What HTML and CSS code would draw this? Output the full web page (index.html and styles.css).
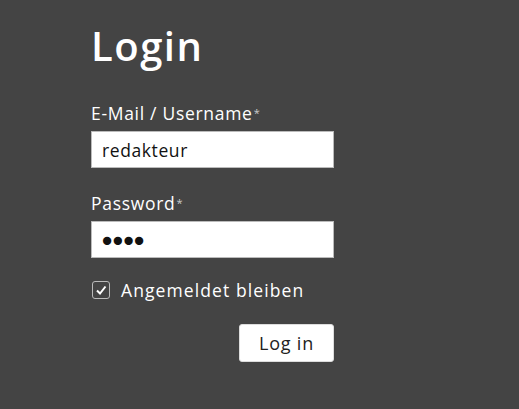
FILE: index.html
```html
<!DOCTYPE html>
<html lang="de">
<head>
    <meta charset="UTF-8">
    <title>Login</title>
    <link rel="stylesheet" href="styles.css">
</head>
<body>
    <div class="login">
        <h1>Login</h1>
        <form>
            <div class="field">
                <label for="user">E-Mail / Username<span class="req">*</span></label>
                <input type="text" id="user" value="redakteur">
            </div>
            <div class="field">
                <label for="pass">Password<span class="req">*</span></label>
                <input type="text" id="pass" class="dots" value="&#9679;&#9679;&#9679;&#9679;">
            </div>
            <label class="remember">
                <span class="box">
                    <svg width="12" height="12" viewBox="0 0 12 12"><path d="M2 6.5 L5 9.5 L10.5 2.5" fill="none" stroke="#fff" stroke-width="2"/></svg>
                </span>
                Angemeldet bleiben
            </label>
            <div class="actions">
                <button type="button" class="btn">Log in</button>
            </div>
        </form>
    </div>
</body>
</html>
```
FILE: styles.css
```css
body {
    margin: 0;
    padding: 0;
    background-color: #444;
    color: #fff;
    font-family: "Open Sans", Lato, sans-serif;
}
.login {
    width: 243px;
    margin-left: 91px;
    padding-top: 24px;
}
h1 {
    margin: 0 0 34px;
    font-size: 40px;
    font-weight: 600;
    line-height: 44px;
    letter-spacing: 1.5px;
}
.field {
    margin-bottom: 24px;
}
.field label {
    display: block;
    font-size: 17.5px;
    line-height: 22px;
    letter-spacing: 0.7px;
    margin-bottom: 7px;
}
.req {
    font-size: 11px;
    vertical-align: top;
    margin-left: 1px;
    color: #ccc;
}
input {
    display: block;
    box-sizing: border-box;
    width: 243px;
    height: 37px;
    border: 1px solid #bbb;
    background: #fff;
    padding: 0 10px;
    font-family: inherit;
    font-size: 17.5px;
    letter-spacing: 0.6px;
    color: #111;
}
.dots {
    font-size: 17px;
    letter-spacing: 0.5px;
}
.remember {
    display: flex;
    align-items: center;
    gap: 11px;
    font-size: 17.5px;
    letter-spacing: 1.1px;
    margin-top: -4px;
}
.box {
    width: 16px;
    height: 16px;
    border: 1px solid #bbb;
    border-radius: 3px;
    display: flex;
    align-items: center;
    justify-content: center;
    margin-left: 1px;
}
.actions {
    display: flex;
    justify-content: flex-end;
    margin-top: 22px;
}
.btn {
    background: #fff;
    color: #222;
    border: 1px solid #ddd;
    border-radius: 3px;
    width: 95px;
    height: 38px;
    font-family: inherit;
    font-size: 18px;
    letter-spacing: 0.8px;
    cursor: pointer;
}
```
